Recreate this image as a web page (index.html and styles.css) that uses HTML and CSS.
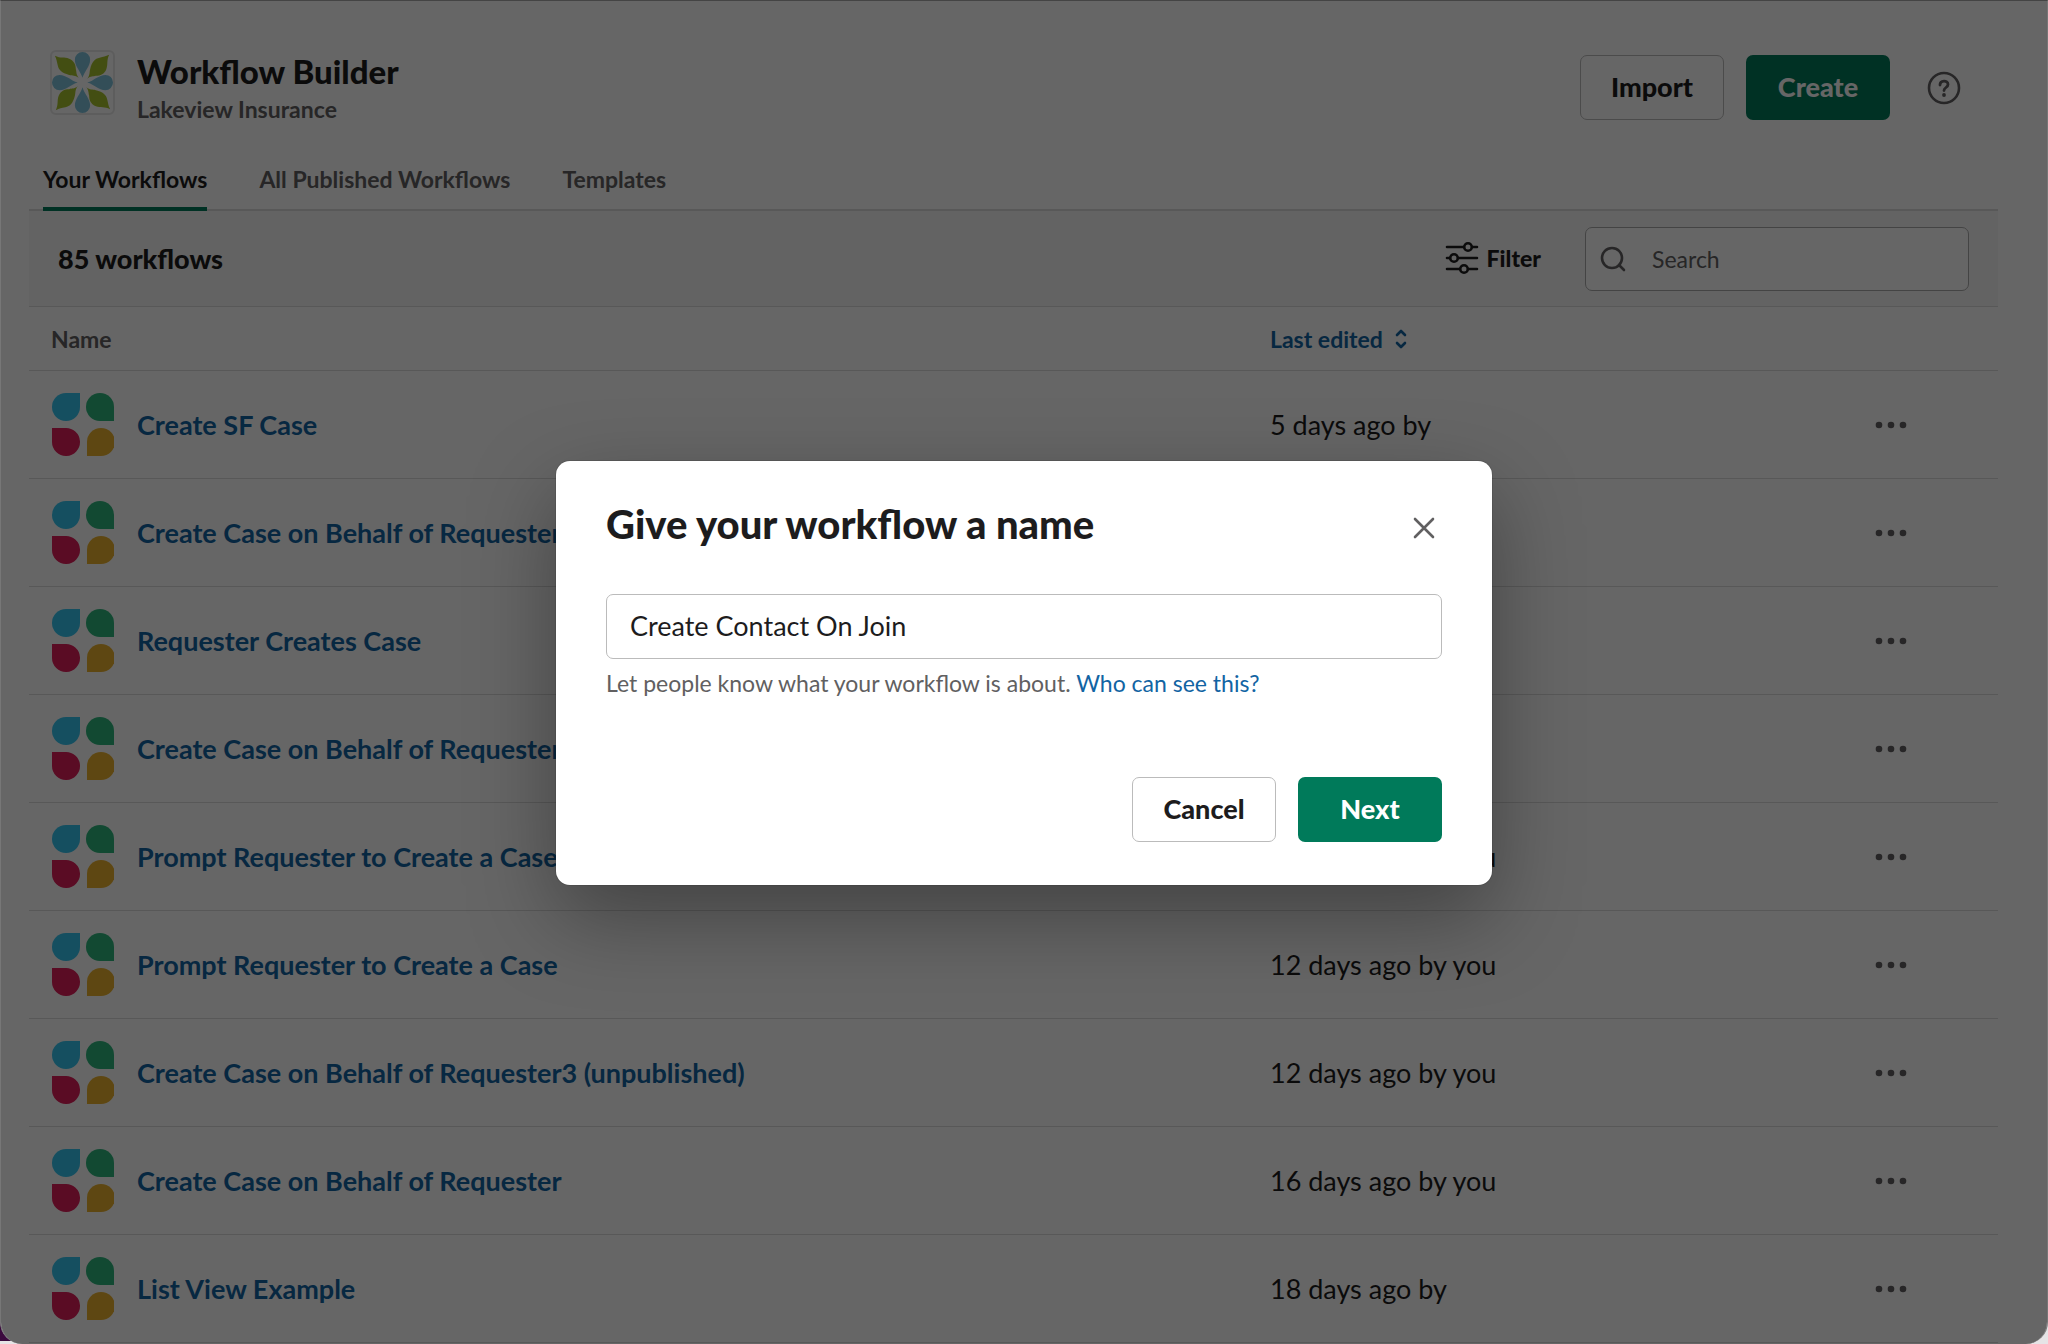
FILE: index.html
```html
<!DOCTYPE html>
<html lang="en">

<head>
    <meta charset="utf-8">
    <meta name="viewport" content="width=device-width, initial-scale=1.0">
    <title>Workflow Builder</title>
    <link rel="stylesheet" href="styles.css">
</head>

<body>
    <!-- shared icons -->
    <svg class="sprite" aria-hidden="true">
        <symbol id="workflow" viewBox="0 0 62 63">
            <path fill="#36c5f0" d="M14 0h14v14a14 14 0 1 1-14-14z" />
            <path fill="#2eb67d" d="M48 0a14 14 0 0 1 14 14v14H48a14 14 0 0 1 0-28z" />
            <path fill="#e01e5a" d="M0 35h13a14 14 0 1 1-13 14z" />
            <path fill="#ecb22e" d="M35 63V49a14 14 0 1 1 14 14z" />
        </symbol>
        <symbol id="dots" viewBox="0 0 32 8">
            <circle cx="4" cy="4" r="3.3" />
            <circle cx="16" cy="4" r="3.3" />
            <circle cx="28" cy="4" r="3.3" />
        </symbol>
    </svg>

    <div class="window">
        <header>
            <svg class="logo" viewBox="0 0 64 64">
                <g id="petals">
                    <path fill="#7fc4dd" d="M32 27C30 20 24 15 24 8a8 8 0 0 1 16 0c0 7-6 12-8 19z" />
                    <path fill="#a9c42f" d="M3 4c6 3 10 1 15 3 5 2 7 6 7 11 1 3 0 5 3 9-4-3-6-2-10-3-8-2-11-5-12-10-1-4-1-6-3-10z" />
                </g>
                <use href="#petals" transform="rotate(90 32 32)" />
                <use href="#petals" transform="rotate(180 32 32)" />
                <use href="#petals" transform="rotate(270 32 32)" />
            </svg>
            <div class="heading">
                <h1>Workflow Builder</h1>
                <p>Lakeview Insurance</p>
            </div>
            <div class="header_actions">
                <button class="btn">Import</button>
                <button class="btn btn_primary">Create</button>
                <button class="icon_btn help" aria-label="Help">
                    <svg width="34" height="34" viewBox="0 0 34 34" fill="none" stroke="currentColor" stroke-linecap="round">
                        <circle cx="17" cy="17" r="15" stroke-width="2.6" />
                        <path stroke-width="2.8" d="M13 14c0-5 8-5 8-.5 0 3-4 3-4 6" />
                        <circle cx="17" cy="24" r="1.9" fill="currentColor" stroke="none" />
                    </svg>
                </button>
            </div>
        </header>

        <main>
            <nav>
                <a href="#" class="selected">Your Workflows</a>
                <a href="#">All Published Workflows</a>
                <a href="#">Templates</a>
            </nav>

            <div class="toolbar">
                <h2>85 workflows</h2>
                <button class="filter">
                    <svg width="34" height="34" viewBox="0 0 34 34" fill="none" stroke="currentColor" stroke-width="2.6" stroke-linecap="round">
                        <path d="M2 6h17M27 6h5M2 17h3M13 17h19M2 28h13M23 28h9" />
                        <circle cx="23" cy="6" r="3.8" />
                        <circle cx="9" cy="17" r="3.8" />
                        <circle cx="19" cy="28" r="3.8" />
                    </svg>
                    Filter
                </button>
                <label class="search">
                    <svg width="26" height="26" viewBox="0 0 26 26" fill="none" stroke="currentColor" stroke-width="2.6" stroke-linecap="round">
                        <circle cx="12" cy="12" r="10" />
                        <path d="M19 19l5 5" />
                    </svg>
                    <input type="text" placeholder="Search" aria-label="Search">
                </label>
            </div>

            <table>
                <thead>
                    <tr>
                        <th class="col_name">Name</th>
                        <th class="col_edited">
                            <button class="sort">Last edited
                                <svg width="12" height="20" viewBox="0 0 12 20" fill="none" stroke="currentColor" stroke-width="2.6" stroke-linecap="round" stroke-linejoin="round">
                                    <path d="M2 6l4-4 4 4M2 14l4 4 4-4" />
                                </svg>
                            </button>
                        </th>
                        <th class="col_more"></th>
                    </tr>
                </thead>
                <tbody>
                    <tr>
                        <td><a href="#"><svg class="tile"><use href="#workflow" /></svg>Create SF Case</a></td>
                        <td>5 days ago by</td>
                        <td><button class="icon_btn more" aria-label="More"><svg class="dots"><use href="#dots" /></svg></button></td>
                    </tr>
                    <tr>
                        <td><a href="#"><svg class="tile"><use href="#workflow" /></svg>Create Case on Behalf of Requester</a></td>
                        <td>5 days ago by</td>
                        <td><button class="icon_btn more" aria-label="More"><svg class="dots"><use href="#dots" /></svg></button></td>
                    </tr>
                    <tr>
                        <td><a href="#"><svg class="tile"><use href="#workflow" /></svg>Requester Creates Case</a></td>
                        <td>6 days ago by</td>
                        <td><button class="icon_btn more" aria-label="More"><svg class="dots"><use href="#dots" /></svg></button></td>
                    </tr>
                    <tr>
                        <td><a href="#"><svg class="tile"><use href="#workflow" /></svg>Create Case on Behalf of Requester</a></td>
                        <td>6 days ago by</td>
                        <td><button class="icon_btn more" aria-label="More"><svg class="dots"><use href="#dots" /></svg></button></td>
                    </tr>
                    <tr>
                        <td><a href="#"><svg class="tile"><use href="#workflow" /></svg>Prompt Requester to Create a Case</a></td>
                        <td>12 days ago by you</td>
                        <td><button class="icon_btn more" aria-label="More"><svg class="dots"><use href="#dots" /></svg></button></td>
                    </tr>
                    <tr>
                        <td><a href="#"><svg class="tile"><use href="#workflow" /></svg>Prompt Requester to Create a Case</a></td>
                        <td>12 days ago by you</td>
                        <td><button class="icon_btn more" aria-label="More"><svg class="dots"><use href="#dots" /></svg></button></td>
                    </tr>
                    <tr>
                        <td><a href="#"><svg class="tile"><use href="#workflow" /></svg>Create Case on Behalf of Requester3 (unpublished)</a></td>
                        <td>12 days ago by you</td>
                        <td><button class="icon_btn more" aria-label="More"><svg class="dots"><use href="#dots" /></svg></button></td>
                    </tr>
                    <tr>
                        <td><a href="#"><svg class="tile"><use href="#workflow" /></svg>Create Case on Behalf of Requester</a></td>
                        <td>16 days ago by you</td>
                        <td><button class="icon_btn more" aria-label="More"><svg class="dots"><use href="#dots" /></svg></button></td>
                    </tr>
                    <tr>
                        <td><a href="#"><svg class="tile"><use href="#workflow" /></svg>List View Example</a></td>
                        <td>18 days ago by</td>
                        <td><button class="icon_btn more" aria-label="More"><svg class="dots"><use href="#dots" /></svg></button></td>
                    </tr>
                </tbody>
            </table>
        </main>

        <div class="overlay">
            <form class="modal" role="dialog" aria-labelledby="modal_title">
                <div class="modal_top">
                    <h2 id="modal_title">Give your workflow a name</h2>
                    <button type="button" class="icon_btn close" aria-label="Close">
                        <svg width="22" height="22" viewBox="0 0 22 22" fill="none" stroke="currentColor" stroke-width="2.6" stroke-linecap="round">
                            <path d="M2 2l18 18M20 2L2 20" />
                        </svg>
                    </button>
                </div>
                <input type="text" class="name_input" value="Create Contact On Join" aria-labelledby="modal_title">
                <p class="hint">Let people know what your workflow is about. <a href="#">Who can see this?</a></p>
                <div class="modal_actions">
                    <button type="button" class="btn">Cancel</button>
                    <button type="button" class="btn btn_primary">Next</button>
                </div>
            </form>
        </div>
    </div>
</body>

</html>
```
FILE: styles.css
```css
* {
    box-sizing: border-box;
}

body {
    margin: 0;
    background: linear-gradient(#3b0a3e, #3b0a3e) 0 0 / 50% calc(100% - 3px) no-repeat #e6e4e6;
    font-family: Lato, sans-serif;
    font-size: 27px;
    line-height: 36px;
    color: #1d1c1d;
}

h1,
h2,
p {
    margin: 0;
}

a {
    color: #1264a3;
    text-decoration: none;
}

button,
input {
    font-family: inherit;
    color: inherit;
}

button {
    cursor: pointer;
}

.sprite {
    display: none;
}

.window {
    position: relative;
    min-height: 100vh;
    overflow: hidden;
    background-color: #fff;
    border: 1px solid #777;
    border-top-color: #444;
    border-bottom: 0;
    border-radius: 0 0 22px 22px;
}

/* header */

header {
    display: flex;
    align-items: flex-start;
    padding: 49px 86px 0 49px;
}

.logo {
    width: 65px;
    height: 65px;
    border: 2px solid #e8e8e8;
    border-radius: 6px;
}

.heading {
    flex: 1;
    padding: 3px 22px 0;
}

.heading h1 {
    font-size: 33px;
    font-weight: 900;
    line-height: 36px;
}

.heading p {
    font-size: 23px;
    font-weight: 700;
    line-height: 40px;
    color: #616061;
}

.header_actions {
    display: flex;
    align-items: center;
    gap: 22px;
    padding-top: 5px;
}

.btn {
    min-width: 144px;
    height: 65px;
    padding: 0 28px 2px;
    border: 1px solid #bbb;
    border-radius: 7px;
    background-color: #fff;
    font-size: 27px;
    font-weight: 900;
}

.btn_primary {
    border: 0;
    background-color: #007a5a;
    color: #fff;
}

.icon_btn {
    display: flex;
    padding: 0;
    border: 0;
    background: none;
    color: #616061;
}

.help {
    margin-left: 15px;
}

/* tabs */

main {
    padding: 0 49px 0 28px;
}

nav {
    display: flex;
    gap: 52px;
    margin-top: 32px;
    padding: 0 14px;
    border-bottom: 2px solid #ddd;
}

nav a {
    margin-bottom: -2px;
    padding-bottom: 10px;
    border-bottom: 4px solid transparent;
    font-size: 23px;
    font-weight: 700;
    color: #616061;
}

nav .selected {
    border-bottom-color: #007a5a;
    color: #1d1c1d;
}

/* toolbar */

.toolbar {
    display: flex;
    align-items: center;
    height: 96px;
    padding: 0 29px;
    background-color: #f8f8f8;
    border-bottom: 1px solid #ddd;
}

.toolbar h2 {
    flex: 1;
    font-size: 27px;
    font-weight: 900;
}

.filter {
    display: flex;
    align-items: center;
    gap: 8px;
    margin-right: 44px;
    padding: 0 0 2px;
    border: 0;
    background: none;
    font-size: 23px;
    font-weight: 900;
}

.search {
    display: flex;
    align-items: center;
    gap: 26px;
    width: 384px;
    height: 64px;
    padding: 0 14px;
    border: 1px solid #aaa;
    border-radius: 7px;
    background-color: #fff;
    color: #616061;
}

.search input {
    flex: 1;
    min-width: 0;
    padding: 0;
    border: 0;
    outline: 0;
    background: none;
    font-size: 23px;
}

.search input::placeholder {
    color: #616061;
}

/* list of workflows */

table {
    width: 100%;
    table-layout: fixed;
    border-spacing: 0;
}

th {
    height: 64px;
    padding: 0;
    border-bottom: 1px solid #ddd;
    font-size: 23px;
    text-align: left;
    color: #616061;
}

.col_name {
    padding-left: 22px;
}

.col_edited {
    width: 514px;
}

.col_more {
    width: 214px;
}

.sort {
    display: flex;
    align-items: center;
    gap: 12px;
    padding: 0;
    border: 0;
    background: none;
    font-size: 23px;
    font-weight: 700;
    color: #1264a3;
}

td {
    height: 108px;
    padding: 0;
    border-bottom: 1px solid #ddd;
}

td a {
    display: flex;
    align-items: center;
    gap: 23px;
    padding-left: 23px;
    font-weight: 700;
}

.tile {
    width: 62px;
    height: 63px;
}

.more {
    margin: 0 auto;
}

.dots {
    width: 32px;
    height: 8px;
    fill: currentColor;
}

/* naming dialog */

.overlay {
    position: absolute;
    inset: 0;
    display: flex;
    align-items: center;
    justify-content: center;
    background-color: rgba(0, 0, 0, 0.6);
}

.modal {
    width: 936px;
    padding: 39px 50px 43px;
    border-radius: 14px;
    background-color: #fff;
    box-shadow: 0 0 0 1px rgba(29, 28, 29, 0.13), 0 32px 86px rgba(0, 0, 0, 0.35);
}

.modal_top {
    display: flex;
    align-items: center;
    justify-content: space-between;
    padding-right: 7px;
}

.modal_top h2 {
    font-size: 40px;
    font-weight: 900;
    line-height: 48px;
}

.close {
    padding-top: 8px;
}

.name_input {
    width: 100%;
    height: 65px;
    margin-top: 46px;
    padding: 0 23px 2px;
    border: 1px solid #bbb;
    border-radius: 7px;
    outline: 0;
    font-size: 27px;
}

.hint {
    margin-top: 6px;
    font-size: 23px;
    color: #616061;
}

.modal_actions {
    display: flex;
    justify-content: flex-end;
    gap: 22px;
    margin-top: 76px;
}
```
